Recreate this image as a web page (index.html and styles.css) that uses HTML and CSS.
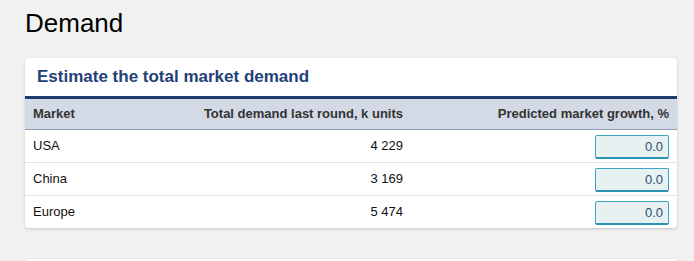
FILE: index.html
```html
<!DOCTYPE html>
<html>
<head>
<meta charset="utf-8">
<link rel="stylesheet" href="styles.css">
</head>
<body>
<div class="page">
  <h1 class="page-title">Demand</h1>
  <section class="card">
    <h2 class="card-title">Estimate the total market demand</h2>
    <table class="grid">
      <colgroup>
        <col class="c1"><col class="c2"><col class="c3">
      </colgroup>
      <thead>
        <tr>
          <th class="left">Market</th>
          <th class="right">Total demand last round, k units</th>
          <th class="right">Predicted market growth, %</th>
        </tr>
      </thead>
      <tbody>
        <tr>
          <td class="left">USA</td>
          <td class="right">4 229</td>
          <td class="right"><input class="num" type="text" value="0.0"></td>
        </tr>
        <tr>
          <td class="left">China</td>
          <td class="right">3 169</td>
          <td class="right"><input class="num" type="text" value="0.0"></td>
        </tr>
        <tr>
          <td class="left">Europe</td>
          <td class="right">5 474</td>
          <td class="right"><input class="num" type="text" value="0.0"></td>
        </tr>
      </tbody>
    </table>
  </section>
  <section class="card next"></section>
</div>
</body>
</html>
```

FILE: styles.css
```css
html, body {
  margin: 0;
  padding: 0;
  background: #f1f1f1;
  font-family: "Liberation Sans", Arial, sans-serif;
  color: #222;
}
.page {
  width: 652px;
  padding: 8px 0 0 25px;
}
.page-title {
  margin: 0;
  font-size: 26px;
  font-weight: normal;
  line-height: 30px;
  color: #000;
}
.card {
  margin-top: 20px;
  background: #fff;
  border-radius: 4px;
  box-shadow: 0 1px 3px rgba(0,0,0,0.18);
  overflow: hidden;
}
.card.next {
  margin-top: 31px;
  height: 40px;
}
.card-title {
  margin: 0;
  padding: 9px 12px 9px;
  font-size: 17px;
  line-height: 20px;
  font-weight: bold;
  color: #1e4178;
  border-bottom: 3px solid #203b6e;
}
.grid {
  width: 100%;
  border-collapse: collapse;
  table-layout: fixed;
  font-size: 13px;
}
.c1 { width: 130px; }
.c2 { width: 256px; }
.c3 { width: 266px; }
.grid th {
  background: #d4dae5;
  color: #333;
  font-weight: bold;
  height: 30px;
  line-height: 30px;
  padding: 0 8px;
  border-bottom: 1px solid #8f9db6;
}
.grid td {
  height: 32px;
  line-height: 32px;
  padding: 0 8px;
  border-bottom: 1px solid #e2e2e2;
  color: #111;
}
.grid tbody tr:last-child td {
  border-bottom: none;
}
.left { text-align: left; }
.right { text-align: right; }
.grid td .num {
  box-sizing: border-box;
  width: 74px;
  height: 24px;
  vertical-align: middle;
  margin: 0;
  padding: 0 5px 0 4px;
  border: 1px solid #3ba6c4;
  border-bottom: 2px solid #2b93b1;
  border-radius: 2px;
  background: #e7f1f2;
  font-family: "Liberation Sans", Arial, sans-serif;
  font-size: 13px;
  color: #2c4f6b;
  text-align: right;
}
```
